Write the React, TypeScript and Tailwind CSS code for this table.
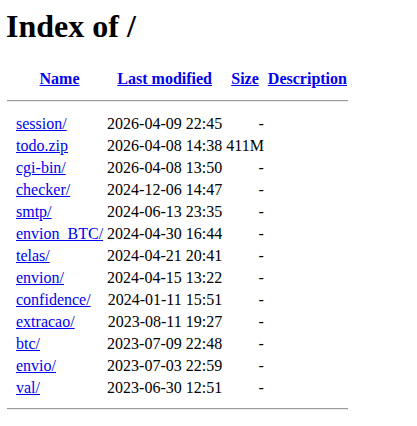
const entries: { name: string; modified: string; size: string }[] = [
  { name: "session/", modified: "2026-04-09 22:45", size: "-" },
  { name: "todo.zip", modified: "2026-04-08 14:38", size: "411M" },
  { name: "cgi-bin/", modified: "2026-04-08 13:50", size: "-" },
  { name: "checker/", modified: "2024-12-06 14:47", size: "-" },
  { name: "smtp/", modified: "2024-06-13 23:35", size: "-" },
  { name: "envion_BTC/", modified: "2024-04-30 16:44", size: "-" },
  { name: "telas/", modified: "2024-04-21 20:41", size: "-" },
  { name: "envion/", modified: "2024-04-15 13:22", size: "-" },
  { name: "confidence/", modified: "2024-01-11 15:51", size: "-" },
  { name: "extracao/", modified: "2023-08-11 19:27", size: "-" },
  { name: "btc/", modified: "2023-07-09 22:48", size: "-" },
  { name: "envio/", modified: "2023-07-03 22:59", size: "-" },
  { name: "val/", modified: "2023-06-30 12:51", size: "-" },
];

function Rule({ last }: { last?: boolean }) {
  return (
    <tr>
      <th colSpan={5} className="p-0">
        <div
          className={
            last
              ? "-ml-[2px] my-2 h-0 border-t border-b border-t-[#9a9a9a] border-b-[#eeeeee]"
              : "-ml-[2px] mt-2 mb-[10px] h-0 border-t border-b border-t-[#9a9a9a] border-b-[#eeeeee]"
          }
        />
      </th>
    </tr>
  );
}

export default function App() {
  const link = "text-[#0000ee] underline";
  const head = "px-px py-[2px]";
  return (
    <div className="min-h-screen bg-white p-2 text-black text-[16px] leading-[normal] font-['Liberation_Serif','Times_New_Roman',serif]">
      <h1 className="-ml-[2px] text-[32px] font-bold leading-[normal] mb-[21.44px]">Index of /</h1>
      <table className="border-separate border-spacing-[2px] -ml-px">
        <tbody>
          <tr>
            <th className={`${head} w-[4px] align-top`}></th>
            <th className={head}><a href="#" className={link}>Name</a></th>
            <th className={head}><a href="#" className={link}>Last modified</a></th>
            <th className={head}><a href="#" className={link}>Size</a></th>
            <th className={head}><a href="#" className={link}>Description</a></th>
          </tr>
          <Rule />
          {entries.map((e) => (
            <tr key={e.name}>
              <td className="p-px align-top"></td>
              <td className="p-px text-left"><a href="#" className={link}>{e.name}</a></td>
              <td className="p-px text-right">{e.modified}</td>
              <td className="p-px text-right">{e.size}</td>
              <td className="p-px">&nbsp;</td>
            </tr>
          ))}
          <Rule last />
        </tbody>
      </table>
    </div>
  );
}
